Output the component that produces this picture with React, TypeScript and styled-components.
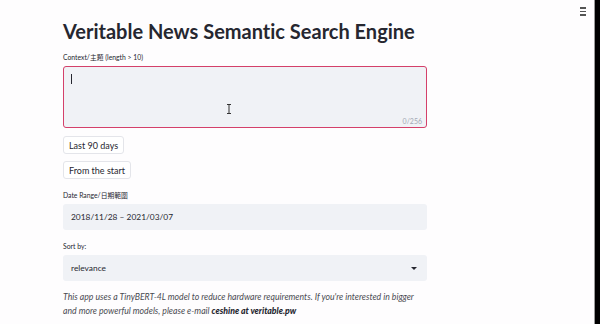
import { createGlobalStyle, styled } from 'styled-components';

const GlobalStyle = createGlobalStyle`
  html, body {
    margin: 0;
    padding: 0;
    background: #fefdfe;
  }
  body {
    font-family: Lato, "Noto Sans", "Noto Sans CJK TC", sans-serif;
    font-variant-ligatures: none;
    color: #262730;
  }
`;

const Frame = styled.div`
  display: flex;
  width: 600px;
  height: 324px;
  overflow: hidden;
`;

const Page = styled.main`
  position: relative;
  flex: 1;
  padding: 18px 0 0 63px;
  background: #fefdfe;
`;

const Edge = styled.div`
  width: 5px;
  background: #000;
  border-left: 1px solid #9a9a9a;
`;

const Menu = styled.button`
  position: absolute;
  top: 7px;
  right: 8px;
  display: flex;
  flex-direction: column;
  gap: 2px;
  padding: 0;
  border: 0;
  background: none;

  span {
    display: block;
    width: 6px;
    height: 1.5px;
    background: #555;
  }
`;

const Column = styled.div`
  width: 364px;
  display: flex;
  flex-direction: column;
`;

const Title = styled.h1`
  margin: 0 0 8px;
  font-size: 20px;
  font-weight: 700;
  line-height: 26px;
  white-space: nowrap;
  color: #262730;
`;

const Label = styled.label`
  display: block;
  font-size: 6.8px;
  line-height: 10px;
  margin-bottom: 4px;
  color: #262730;
`;

const TextArea = styled.div`
  position: relative;
  height: 62px;
  box-sizing: border-box;
  border: 1.5px solid #d4406a;
  border-radius: 3px;
  background: #f0f2f6;
`;

const Caret = styled.span`
  position: absolute;
  left: 7px;
  top: 7px;
  width: 1px;
  height: 10px;
  background: #262730;
`;

const Counter = styled.span`
  position: absolute;
  right: 4px;
  bottom: 2px;
  font-size: 7px;
  color: #a3a8b4;
`;

const Pointer = styled.svg`
  position: absolute;
  left: 162px;
  top: 37px;
`;

const Button = styled.button<{ $top: number }>`
  align-self: flex-start;
  margin-top: ${(p) => p.$top}px;
  height: 18px;
  padding: 0 5px;
  border: 1px solid #e4e5ea;
  border-radius: 3px;
  background: #fff;
  font-family: Lato, "Noto Sans", sans-serif;
  font-size: 9px;
  color: #262730;
`;

const Field = styled.div<{ $top: number }>`
  margin-top: ${(p) => p.$top}px;
`;

const Input = styled.div`
  position: relative;
  height: 26px;
  display: flex;
  align-items: center;
  padding: 0 8px;
  border-radius: 3px;
  background: #f0f2f6;
  font-size: 8.4px;
  color: #262730;
`;

const Arrow = styled.span`
  position: absolute;
  right: 10px;
  top: 12px;
  width: 0;
  height: 0;
  border-left: 3px solid transparent;
  border-right: 3px solid transparent;
  border-top: 3px solid #262730;
`;

const Note = styled.p`
  margin: 9px 0 0;
  font-size: 8.7px;
  line-height: 14px;
  font-style: italic;
  white-space: nowrap;
  color: #4a4b52;

  b {
    font-weight: 900;
    color: #262730;
  }
`;

export default function App() {
  return (
    <>
      <GlobalStyle />
      <Frame>
        <Page>
          <Menu aria-label="menu">
            <span />
            <span />
            <span />
          </Menu>
          <Column>
            <Title>Veritable News Semantic Search Engine</Title>
            <Label>Context/主題 (length &gt; 10)</Label>
            <TextArea>
              <Caret />
              <Pointer width="6" height="10" viewBox="0 0 6 10">
                <path d="M1 0.5h4M3 0.5v9M1 9.5h4" stroke="#333" strokeWidth="1" fill="none" />
              </Pointer>
              <Counter>0/256</Counter>
            </TextArea>
            <Button $top={8}>Last 90 days</Button>
            <Button $top={7}>From the start</Button>
            <Field $top={11}>
              <Label>Date Range/日期範圍</Label>
              <Input>2018/11/28 – 2021/03/07</Input>
            </Field>
            <Field $top={11}>
              <Label>Sort by:</Label>
              <Input>
                relevance
                <Arrow />
              </Input>
            </Field>
            <Note>
              This app uses a TinyBERT-4L model to reduce hardware requirements. If you're interested in bigger
              <br />
              and more powerful models, please e-mail <b>ceshine at veritable.pw</b>
            </Note>
          </Column>
        </Page>
        <Edge />
      </Frame>
    </>
  );
}
